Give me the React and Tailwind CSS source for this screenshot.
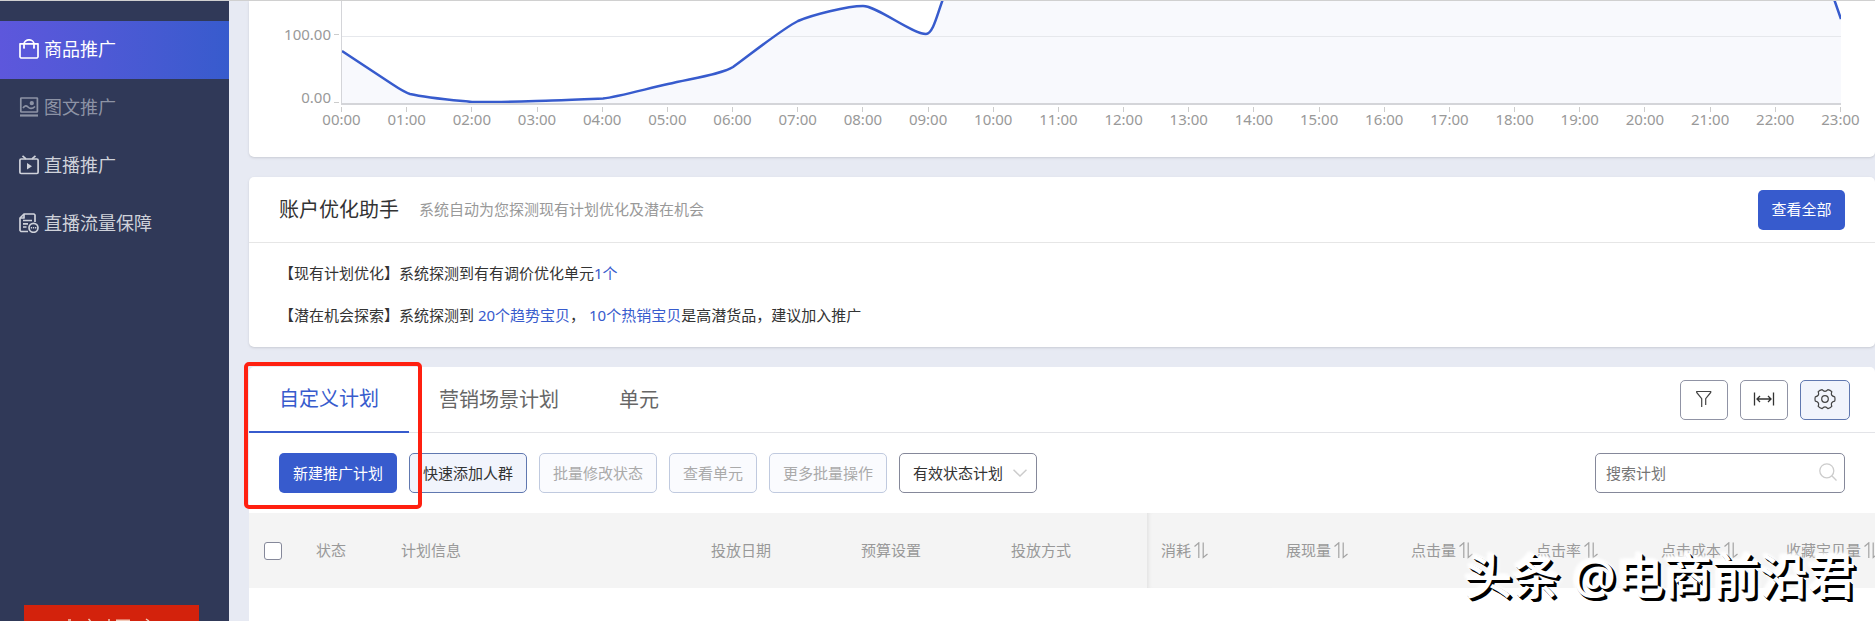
const NAV_ITEMS = [
  { label: '商品推广', icon: 'bag', active: true },
  { label: '图文推广', icon: 'image', muted: true },
  { label: '直播推广', icon: 'tv' },
  { label: '直播流量保障', icon: 'doc' },
]

const HOURS = Array.from({ length: 24 }, (_, i) => `${String(i).padStart(2, '0')}:00`)

const LINE =
  'M0 50 L50 83 C59 89 62 91 68 93 C85 97 110 99 130 101 C150 101.5 190 100 210 99.5 S250 98 261 97.5 C275 96 300 89 326 83 S380 73 391 66 C405 56 440 28 456 20 C470 14 505 5 521 5 C535 5 570 33 584 33 C591 33 595 14 601 -2 L1492 -2 L1499 18'

const METRICS = ['消耗', '展现量', '点击量', '点击率', '点击成本', '收藏宝贝量']

function NavIcon({ name }) {
  return (
    <svg viewBox="0 0 20 20" className="h-5 w-5 shrink-0" fill="none" stroke="currentColor" strokeWidth="1.7" strokeLinejoin="round" aria-hidden="true">
      {name === 'bag' && (
        <>
          <path d="M1 4.8h18V18l-1 1H2l-1-1z" />
          <path d="M5 9.500V5a5 4.200 0 0 1 10 0v4.500" />
          <path d="M4.600 8.600h1M14.400 8.600h1" strokeWidth="2" />
        </>
      )}
      {name === 'image' && (
        <>
          <rect x="1.800" y="1" width="16.600" height="14" rx="0.500" />
          <path d="M4 11c2-3 3.500-2.500 5-1s4 2.500 7-.5" />
          <circle cx="12.800" cy="6.200" r="1.300" fill="currentColor" />
          <path d="M1 18.500h18" strokeWidth="2.200" />
        </>
      )}
      {name === 'tv' && (
        <>
          <rect x="0.900" y="4" width="18.200" height="14.500" rx="1.200" />
          <path d="M3.500 0.800l3.500 3M16.500 0.800l-3.500 3" />
          <path d="M8 8v6.500l5-3.200z" fill="currentColor" stroke="none" />
        </>
      )}
      {name === 'doc' && (
        <>
          <path d="M9 18.500H2L1 17.500V5l4-4h10l1 1v7" />
          <path d="M5 1v4H1M4 7.500h9M4 10.800h5M4 14h3.500" />
          <circle cx="14.500" cy="14.800" r="4.500" />
          <path d="M11.800 14.800h5.500" strokeDasharray="1.300 0.800" strokeWidth="1.600" />
        </>
      )}
    </svg>
  )
}

function Sidebar() {
  return (
    <aside className="flex w-[229px] shrink-0 flex-col justify-between bg-[#303958] pt-5">
      <nav>
        {NAV_ITEMS.map((item) => (
          <a
            key={item.label}
            href="#"
            className={`flex h-[58px] items-center gap-[5px] pb-0.5 pl-[19px] text-[18px] ${
              item.active
                ? 'bg-linear-to-r from-[#5d57dc] to-[#375bcd] text-white'
                : item.muted
                  ? 'text-[#8d93a5]'
                  : 'text-[#cfd2da]'
            }`}
          >
            <NavIcon name={item.icon} />
            {item.label}
          </a>
        ))}
      </nav>
      {/* top edge of the promo banner */}
      <a href="#" aria-label="banner" className="ml-6 block h-4 w-[175px] bg-[#d3220c]">
        <svg viewBox="0 0 175 16" className="block h-4 w-full" stroke="#f3c9b8" strokeWidth="1.500" aria-hidden="true">
          <path d="M44 15h3M64.500 14l2 2M84 15h2M92 15.200h14M122 14l3 2" />
        </svg>
      </a>
    </aside>
  )
}

function TrendChart() {
  return (
    <section className="flex rounded-b-[5px] bg-white pr-[34px] pb-[30px] text-[15px] leading-5 text-[#999] shadow-sm">
      <div className="flex w-[92px] shrink-0 flex-col items-end gap-[43px] pt-[23px] pr-[2px]">
        <div className="flex items-center gap-[3px]">
          100.00
          <i className="h-px w-[5px] bg-[#ccc]" />
        </div>
        <div className="flex items-end gap-[3px]">
          0.00
          <i className="mb-1 h-px w-[5px] bg-[#ccc]" />
        </div>
      </div>
      <div className="min-w-0 flex-1">
        <svg viewBox="0 0 1499 102" preserveAspectRatio="none" className="block h-[104px] w-full overflow-hidden border-b-2 border-l border-[#d4d5d9]">
          <path d={`${LINE} V102 H0 Z`} fill="#f8f9fd" />
          <path d="M0 35.500H1499" stroke="#e6e8ec" />
          <path d={LINE} fill="none" stroke="#375bcd" strokeWidth="2.500" vectorEffect="non-scaling-stroke" />
        </svg>
        <div className="flex justify-between pt-[2px] leading-[15px]">
          {HOURS.map((hour) => (
            <div key={hour} className="flex w-px flex-col items-center">
              <i className="h-[5px] w-px bg-[#ccc]" />
              <span>{hour}</span>
            </div>
          ))}
        </div>
      </div>
    </section>
  )
}

function Assistant() {
  return (
    <section className="rounded-[5px] bg-white shadow-sm">
      <header className="flex h-[66px] items-center border-b border-[#e6e6e6] px-[30px]">
        <h2 className="text-[20px] text-[#333]">账户优化助手</h2>
        <p className="ml-5 text-[15px] text-[#999]">系统自动为您探测现有计划优化及潜在机会</p>
        <button className="ml-auto h-10 w-[87px] rounded-[5px] bg-[#375bcd] text-[15px] text-white">查看全部</button>
      </header>
      <div className="px-[30px] pt-[9px] pb-[11px] text-[15px] leading-[42px] text-[#333]">
        <p>
          【现有计划优化】系统探测到有有调价优化单元<a href="#" className="text-[#375bcd]">1个</a>
        </p>
        <p>
          【潜在机会探索】系统探测到 <a href="#" className="text-[#375bcd]">20个趋势宝贝</a>，{' '}
          <a href="#" className="text-[#375bcd]">10个热销宝贝</a>是高潜货品，建议加入推广
        </p>
      </div>
    </section>
  )
}

function SortIcon() {
  return (
    <svg viewBox="0 0 14 17" className="h-[17px] w-[14px] shrink-0" fill="none" stroke="#a3a3a3" strokeWidth="1.200" aria-hidden="true">
      <path d="M0.500 4.500L4.800 0.800V16M9.200 0.500V15.500L13.500 12" />
    </svg>
  )
}

function Tools() {
  const button = 'flex h-10 items-center justify-center rounded-[5px] border'
  return (
    <div className="ml-auto flex gap-3 pr-[25px]">
      <button aria-label="筛选" className={`${button} w-12 border-[#9093a5]`}>
        <svg viewBox="0 0 20 20" className="h-5 w-5" fill="none" stroke="#444" strokeWidth="1.200">
          <path d="M7.700 17V8.700L2.700 2.500V1.500h14v1l-5 6.200V15" />
        </svg>
      </button>
      <button aria-label="列宽" className={`${button} w-12 border-[#9093a5]`}>
        <svg viewBox="0 0 22 16" className="h-4 w-[22px]" fill="none" stroke="#333" strokeWidth="1.300">
          <path d="M1.500 0.500v13M20.500 0.500v13M4 7h14M7 4L4 7l3 3M15 4l3 3-3 3" />
        </svg>
      </button>
      <button aria-label="设置" className={`${button} w-[50px] border-[#6078b0] bg-[#f1f4fc]`}>
        <svg viewBox="-11 -11 22 22" className="h-[22px] w-[22px]" fill="none" stroke="#444" strokeWidth="1.200" strokeLinejoin="round">
          <path d="M9.700 -3.200Q10.300 -1 9.700 1.200Q5.200 2 6.800 6.300Q5.200 8 2.900 8.600Q0 5 -2.900 8.600Q-5.200 8 -6.800 6.300Q-5.200 2 -9.700 1.200Q-10.300 -1 -9.700 -3.200Q-5.200 -4 -6.800 -8.300Q-5.200 -10 -2.900 -10.400Q0 -7 2.900 -10.400Q5.200 -10 6.800 -8.300Q5.200 -4 9.700 -3.200Z" />
          <circle cx="0" cy="-1" r="3.300" />
        </svg>
      </button>
    </div>
  )
}

function Toolbar() {
  const disabled = 'h-10 rounded-[5px] border border-[#c0cadf] bg-[#fafbfe] text-[#aaa]'
  return (
    <div className="flex items-center gap-3 px-[30px] py-5 text-[15px]">
      <button className="h-10 w-[118px] rounded-[5px] bg-[#375bcd] text-white">新建推广计划</button>
      <button className="h-10 w-[118px] rounded-[5px] border border-[#6078b0] bg-[#f1f4fc] text-[#333]">快速添加人群</button>
      <button disabled className={`${disabled} w-[118px]`}>批量修改状态</button>
      <button disabled className={`${disabled} w-[88px]`}>查看单元</button>
      <button disabled className={`${disabled} w-[118px]`}>更多批量操作</button>
      <div className="relative">
        <select aria-label="计划状态" className="h-10 w-[138px] appearance-none rounded-[5px] border border-[#85889a] bg-white pl-[13px] text-[#333]">
          <option>有效状态计划</option>
        </select>
        <svg viewBox="0 0 14 8" className="pointer-events-none absolute top-4 right-[10px] h-2 w-[14px]" fill="none" stroke="#ccc" strokeWidth="1.500">
          <path d="M0.500 0.800L7 7l6.500-6.200" />
        </svg>
      </div>
      <div className="relative ml-auto">
        <input
          type="text"
          aria-label="搜索计划"
          placeholder="搜索计划"
          className="h-10 w-[250px] rounded-[5px] border border-[#85889a] pl-[10px] placeholder:text-[#757575]"
        />
        <svg viewBox="0 0 18 18" className="absolute top-[10px] right-2 h-[18px] w-[18px]" fill="none" stroke="#ccc" strokeWidth="1.300" aria-hidden="true">
          <circle cx="7.800" cy="7.800" r="7" />
          <path d="M12.800 12.800l4.700 4.700" />
        </svg>
      </div>
    </div>
  )
}

function PlanTable() {
  return (
    <table className="w-full table-fixed text-left text-[15px] whitespace-nowrap text-[#999]">
      <thead>
        <tr className="h-[75px] bg-[#f4f4f4] *:font-normal">
          <th className="w-[52px] pl-[15px]">
            <input type="checkbox" aria-label="全选" className="block h-[18px] w-[18px] appearance-none rounded-[3px] border border-[#85889a] bg-white" />
          </th>
          <th className="w-[85px] pl-[15px]">状态</th>
          <th className="pl-[15px]">计划信息</th>
          <th className="w-[150px] pl-[15px]">投放日期</th>
          <th className="w-[150px] pl-[15px]">预算设置</th>
          <th className="w-[151px] pl-[15px]">投放方式</th>
          {METRICS.map((name, i) => (
            <th
              key={name}
              className={`overflow-hidden pl-[14px] ${i === METRICS.length - 1 ? 'w-[103px]' : 'w-[125px]'} ${
                i === 0 ? 'shadow-[inset_4px_0_4px_-3px_#ddd]' : ''
              }`}
            >
              <span className="flex items-center gap-[3px]">
                {name}
                <SortIcon />
              </span>
            </th>
          ))}
        </tr>
      </thead>
    </table>
  )
}

function Plans() {
  return (
    <section className="relative flex-1 rounded-t-[5px] bg-white">
      <div className="flex h-[66px] items-center border-b border-[#e3e4e8] text-[20px] text-[#666]" role="tablist">
        <button role="tab" aria-selected="true" className="-mb-px h-[66px] border-b-2 border-[#375bcd] px-[30px] text-[#375bcd]">自定义计划</button>
        <button role="tab" aria-selected="false" className="h-full px-[30px]">营销场景计划</button>
        <button role="tab" aria-selected="false" className="h-full px-[30px]">单元</button>
        <Tools />
      </div>
      <Toolbar />
      <PlanTable />
      {/* highlight around the first tab and the create button */}
      <div className="pointer-events-none absolute -top-[5px] -left-[5px] h-[147px] w-[178px] rounded-[5px] border-4 border-[#ff2010]" />
    </section>
  )
}

export default function App() {
  return (
    <div className="relative flex h-screen overflow-hidden border-t border-[#d0d0d0] bg-[#e7eaf3] font-['Noto_Sans','Noto_Sans_CJK_SC',sans-serif]">
      <Sidebar />
      <main className="flex min-w-0 flex-1 flex-col gap-5 pl-5">
        <TrendChart />
        <Assistant />
        <Plans />
      </main>
      <div className="pointer-events-none absolute right-[19px] bottom-[15px] text-[48px] leading-[60px] font-medium whitespace-nowrap text-white [text-shadow:1px_1px_0_#000,2px_2px_0_#000,3px_3px_0_#000,0_0_4px_#fff,-2px_-2px_3px_#fff,4px_4px_4px_#fff]">
        头条 @电商前沿君
      </div>
    </div>
  )
}
